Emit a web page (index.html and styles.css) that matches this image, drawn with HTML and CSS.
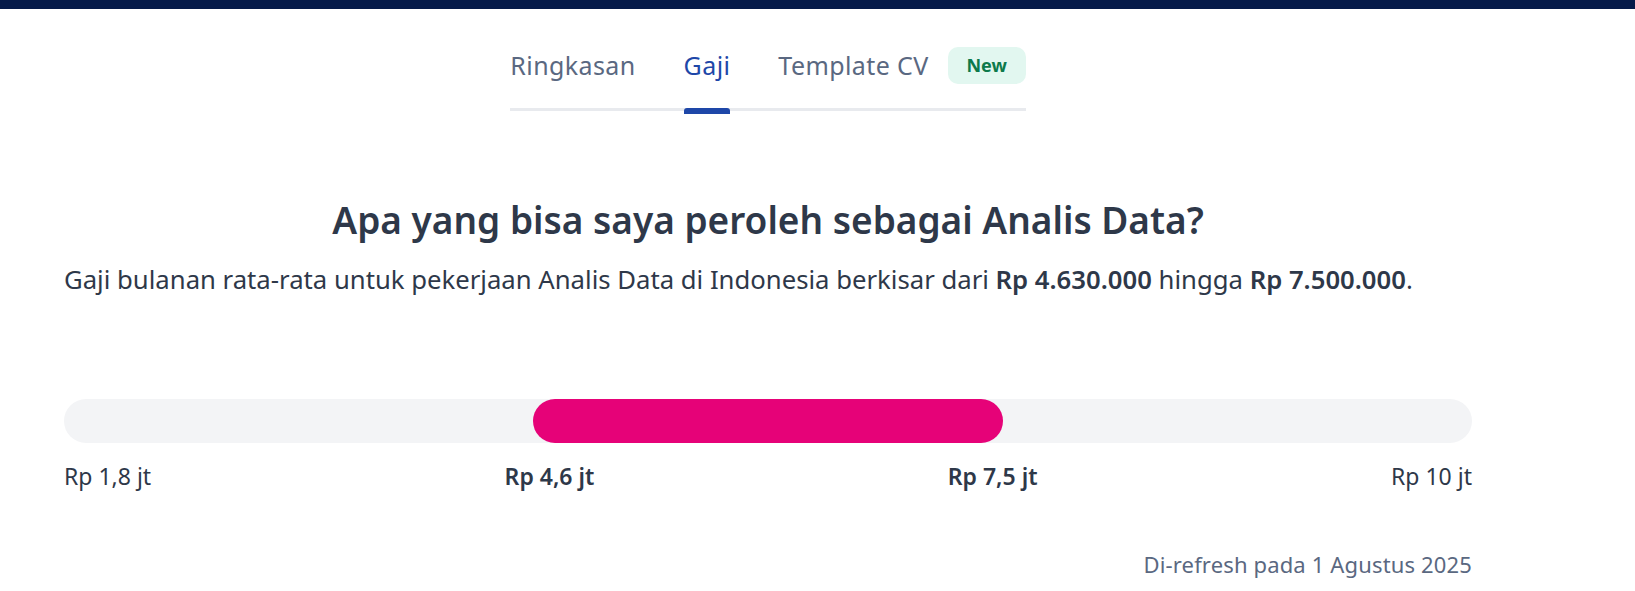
FILE: index.html
```html
<!DOCTYPE html>
<html lang="id">
<head>
  <meta charset="UTF-8" />
  <meta name="viewport" content="width=device-width, initial-scale=1.0"/>
  <title>Gaji Analis Data</title>
  <link rel="stylesheet" href="styles.css">
</head>
<body>
  <div class="topbar"></div>

  <main class="page">
    <nav class="tabs">
      <a class="tab">Ringkasan</a>
      <a class="tab active">Gaji</a>
      <a class="tab">Template CV</a>
      <span class="badge">New</span>
    </nav>

    <section class="salary">
      <h2>Apa yang bisa saya peroleh sebagai Analis Data?</h2>
      <p class="summary">Gaji bulanan rata-rata untuk pekerjaan Analis Data di Indonesia berkisar dari <b>Rp 4.630.000</b> hingga <b>Rp 7.500.000</b>.</p>

      <div class="range">
        <div class="range-fill" style="margin-left: 33.333%; width: 33.333%;"></div>
      </div>
      <div class="range-labels">
        <span>Rp 1,8 jt</span>
        <span class="strong">Rp 4,6 jt</span>
        <span class="strong">Rp 7,5 jt</span>
        <span>Rp 10 jt</span>
      </div>

      <p class="refreshed">Di-refresh pada 1 Agustus 2025</p>
    </section>
  </main>
</body>
</html>
```

FILE: styles.css
```css
body {
  margin: 0;
  padding: 0;
  background: #fff;
  color: #2e3849;
  font-family: 'Noto Sans', sans-serif;
}

.topbar {
  height: 9px;
  background: #051a49;
}

.page {
  width: 1408px;
  margin-left: 64px;
}

.tabs {
  display: flex;
  align-items: center;
  gap: 48px;
  width: fit-content;
  margin: 38px auto 0;
  padding-bottom: 24px;
  border-bottom: 3px solid #e8eaee;
}

.tab {
  position: relative;
  font-size: 25px;
  letter-spacing: 0.4px;
  line-height: 37px;
  color: #5a6881;
  cursor: pointer;
}

.tab.active {
  color: #1e47a8;
}

.tab.active::after {
  content: '';
  position: absolute;
  left: 0;
  right: 0;
  bottom: -30px;
  height: 6px;
  background: #1e47a8;
  border-radius: 3px 3px 0 0;
}

.badge {
  margin-left: -29px;
  width: 78px;
  height: 37px;
  line-height: 37px;
  text-align: center;
  border-radius: 10px;
  background: #e2f7f0;
  color: #0d7a4b;
  font-size: 18px;
  font-weight: bold;
}

.salary h2 {
  margin: 87px 0 0;
  text-align: center;
  font-size: 37px;
  line-height: 43px;
  font-weight: 600;
}

.summary {
  margin: 20px 0 0;
  font-size: 25.7px;
  line-height: 37px;
}

.summary b {
  font-weight: 600;
}

.range {
  display: flex;
  height: 44px;
  margin-top: 101px;
  border-radius: 22px;
  background: #f3f4f6;
}

.range-fill {
  border-radius: 22px;
  background: #e60278;
}

.range-labels {
  display: flex;
  justify-content: space-between;
  margin-top: 16px;
  font-size: 23px;
  line-height: 34px;
}

.range-labels .strong {
  font-weight: 600;
}

.refreshed {
  margin: 56px 0 0;
  text-align: right;
  font-size: 22px;
  letter-spacing: 0.15px;
  line-height: 30px;
  color: #5a6881;
}
```
